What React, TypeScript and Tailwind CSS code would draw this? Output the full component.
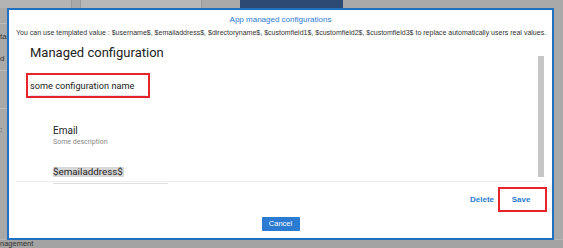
export default function App() {
  const sans = { fontFamily: '"Liberation Sans", Arial, sans-serif' };
  const roboto = { fontFamily: 'Roboto, "Liberation Sans", sans-serif' };

  return (
    <div className="relative w-[563px] h-[248px] overflow-hidden bg-[#a9a9a9]" style={sans}>
      {/* page behind the modal */}
      <div className="flex h-[8px]">
        <div className="w-[72px] bg-[#b4b4b4] border-r border-[#9a9a9a]" />
        <div className="w-[8px]" />
        <div className="w-[122px] bg-[#b8b8b8] border-x border-[#999]" />
        <div className="w-[38px]" />
        <div className="w-[103px] bg-[#2c4a73]" />
      </div>
      <div className="flex flex-col w-[7px] text-[8px] text-[#333] leading-[10px]">
        <div className="h-[16px] border-b border-[#bdbdbd]" />
        <div className="mt-[8px] whitespace-nowrap">ta</div>
        <div className="mt-[12px] whitespace-nowrap border-b border-[#bdbdbd] pb-[6px]">d</div>
        <div className="mt-[18px] h-[20px] border-b border-[#bdbdbd]" />
        <div className="mt-[16px] whitespace-nowrap">:</div>
      </div>
      <div className="absolute left-0 bottom-0 w-full h-[9px] bg-[#a3a3a3] border-t border-[#b5b5b5]">
        <div className="text-[7.5px] leading-[8px] text-[#333]">nagement</div>
      </div>

      {/* modal */}
      <div className="absolute left-[7px] top-[8px] w-[547px] h-[232px] bg-white border-2 border-[#1f70c1] flex flex-col">
        <div className="mt-[5px] text-center text-[8px] leading-[10px] text-[#2b7bd3]">App managed configurations</div>
        <div className="mt-[3px] pl-[7px] text-[7.03px] leading-[10px] text-[#333] whitespace-nowrap">
          You can use templated value : $username$, $emailaddress$, $directoryname$, $customfield1$, $customfield2$, $customfield3$ to replace automatically users real values.
        </div>

        {/* scrolling body */}
        <div className="mx-[7px] h-[144px] flex border-b border-[#ececec]">
          <div className="flex-1 flex flex-col" style={roboto}>
            <div className="mt-[6px] pl-[14px] text-[13px] leading-[18px] text-[#222]">Managed configuration</div>
            <div className="mt-[11px] ml-[10px] w-[124px] h-[28px] border-2 border-[#e8232b]">
              <div className="mx-[2px] mt-[4px] pb-[2px] border-b border-[#e4e4e4] text-[9.2px] leading-[14px] text-[#222] whitespace-nowrap">
                some configuration name
              </div>
            </div>
            <div className="mt-[27px] pl-[37px] flex flex-col">
              <div className="text-[10px] leading-[12px] text-[#222]">Email</div>
              <div className="mt-[1px] text-[7px] leading-[9px] text-[#888]">Some description</div>
              <div className="mt-[11px] w-[115px] border-b border-[#e0e0e0] pb-[1px]">
                <span className="inline-block bg-[#d8d8d8] text-[9.8px] leading-[10px] text-[#222] pr-[1px]">$emailaddress$</span>
              </div>
            </div>
          </div>
          <div className="mt-[18px] mr-[1px] w-[6px] h-[121px] bg-[#c6c6c6]" />
        </div>

        {/* footer */}
        <div className="mt-[5px] mr-[5px] flex justify-end items-center">
          <span className="text-[8px] font-bold text-[#2b7bd3]">Delete</span>
          <div className="ml-[4px] w-[49px] h-[25px] border-2 border-[#e8232b] flex items-center justify-center">
            <span className="text-[8px] font-bold text-[#2b7bd3] -ml-[3px]">Save</span>
          </div>
        </div>
        <div className="mt-[5px] flex justify-center">
          <button className="w-[38px] h-[14px] bg-[#2b7bd3] rounded-[1px] text-white text-[7.5px] leading-[14px]">Cancel</button>
        </div>
      </div>
    </div>
  );
}
